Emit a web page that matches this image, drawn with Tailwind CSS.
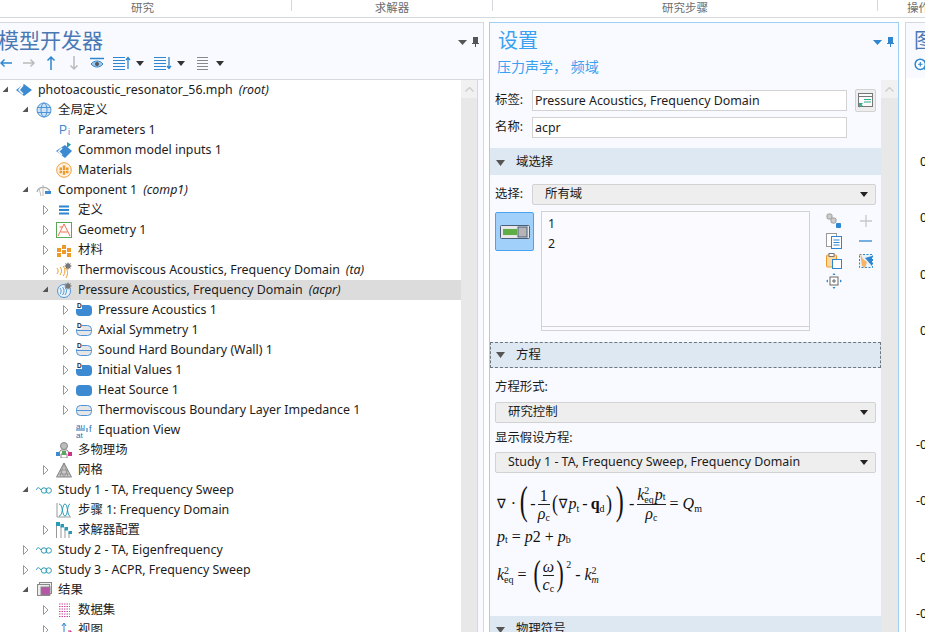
<!DOCTYPE html>
<html lang="en">
<head>
  <meta charset="UTF-8">
  <title>Model Builder</title>
  <script src="https://cdn.jsdelivr.net/npm/@tailwindcss/browser@4"></script>
</head>
<body class="w-[925px] h-[632px] overflow-hidden bg-white text-[#1c1c1c] text-[12.4px] font-['Noto_Sans','Noto_Sans_CJK_SC',sans-serif]">

  <!-- shared icons -->
  <svg class="hidden">
    <symbol id="open" viewBox="0 0 12 12"><path d="M8 2.500V8H2.500z" fill="#555"/></symbol>
    <symbol id="closed" viewBox="0 0 12 12"><path d="M3.500 1.500L8 6l-4.500 4.500z" fill="#fff" stroke="#999"/></symbol>
    <symbol id="solid" viewBox="0 0 16 16"><rect x="0" y="3" width="16" height="11" rx="4" fill="#3b8ad2"/></symbol>
    <symbol id="dsolid" viewBox="0 0 16 16"><rect x="0" y="3" width="16" height="11" rx="4" fill="#3b8ad2"/><rect x="0" y="0" width="6" height="7" fill="#fff"/><text x="1" y="6" font-size="6.500" font-weight="700" font-family="Liberation Sans" fill="#223">D</text></symbol>
    <symbol id="bound" viewBox="0 0 16 16"><rect x=".5" y="3.500" width="15" height="10" rx="4" fill="#e6e6e6" stroke="#4d95d8"/><path d="M0 8.500h16" stroke="#4d95d8"/></symbol>
    <symbol id="dbound" viewBox="0 0 16 16"><rect x=".5" y="3.500" width="15" height="10" rx="4" fill="#e6e6e6" stroke="#4d95d8"/><path d="M0 8.500h16" stroke="#4d95d8"/><rect x="0" y="0" width="6" height="7" fill="#fff"/><text x="1" y="6" font-size="6.500" font-weight="700" font-family="Liberation Sans" fill="#223">D</text></symbol>
    <symbol id="study" viewBox="0 0 16 16"><path d="M0 8c1.500-3 3-3 5 0" fill="none" stroke="#2a9bb5"/><circle cx="8" cy="8.500" r="2.700" fill="none" stroke="#2a9bb5"/><circle cx="12.700" cy="8.500" r="2.700" fill="none" stroke="#2a9bb5"/></symbol>
  </svg>

  <!-- ribbon group labels -->
  <div class="h-[18px] flex text-[11.5px] leading-[16px] text-[#6d6d6d] border-b border-[#d5d8dc]">
    <div class="w-[292px] shrink-0 h-[11px] pr-[6px] text-center border-r border-[#d5d8dc]">研究</div>
    <div class="w-[201px] shrink-0 h-[11px] text-center border-r border-[#d5d8dc]">求解器</div>
    <div class="w-[385px] shrink-0 h-[11px] text-center border-r border-[#d5d8dc]">研究步骤</div>
    <div class="pl-[29px] whitespace-nowrap shrink-0">操作</div>
  </div>

  <div class="flex mt-[4px] h-[610px]">
    <!-- model builder -->
    <div class="w-[484px] shrink-0 flex flex-col bg-[#f9faff] border-t border-r border-[#d5d8dc] overflow-hidden">
      <div class="h-[57px] shrink-0 relative border-b border-[#d5d8dc]">
        <div class="text-[21px] leading-[26px] pt-[4px] -ml-[2px] text-[#4a78b4]">模型开发器</div>
        <div class="flex items-center h-[20px]">
          <svg class="-ml-[1px]" width="14" height="12" viewBox="0 0 14 12"><path d="M13 6H2M5.500 2.500L2 6l3.500 3.500" fill="none" stroke="#2d86cf" stroke-width="1.500"/></svg>
          <svg class="ml-[9px]" width="14" height="12" viewBox="0 0 14 12"><path d="M1 6h11M8.500 2.500L12 6 8.500 9.500" fill="none" stroke="#bbb" stroke-width="1.500"/></svg>
          <svg class="ml-[8px]" width="14" height="16" viewBox="0 0 14 16"><path d="M7 15V2M3.500 5.500L7 2l3.500 3.500" fill="none" stroke="#2d86cf" stroke-width="1.500"/></svg>
          <svg class="ml-[9px]" width="14" height="16" viewBox="0 0 14 16"><path d="M7 1v13M3.500 10.500L7 14l3.500-3.500" fill="none" stroke="#bbb" stroke-width="1.500"/></svg>
          <svg class="ml-[9px]" width="14" height="12" viewBox="0 0 14 12"><path d="M0 1.500h14" stroke="#2d86cf" stroke-width="1.500"/><path d="M1 7c3-4 9-4 12 0-3 4-9 4-12 0z" fill="#9fc7ea" stroke="#2d86cf"/><circle cx="7" cy="7" r="2" fill="#555"/></svg>
          <svg class="ml-[9px]" width="18" height="14" viewBox="0 0 18 14"><path d="M0 1.500h12M0 4.500h12M0 7.500h12M0 10.500h12M0 13.500h12" stroke="#2d86cf"/><path d="M15 13V2M13 4l2-2.500L17 4" fill="none" stroke="#2d86cf" stroke-width="1.300"/></svg>
          <svg class="ml-[5px]" width="8" height="5" viewBox="0 0 8 5"><path d="M0 0h8L4 5z" fill="#333"/></svg>
          <svg class="ml-[10px]" width="18" height="14" viewBox="0 0 18 14"><path d="M0 1.500h12M0 4.500h12M0 7.500h12M0 10.500h12M0 13.500h12" stroke="#2d86cf"/><path d="M15 1v11M13 10l2 2.500 2-2.500" fill="none" stroke="#2d86cf" stroke-width="1.300"/></svg>
          <svg class="ml-[5px]" width="8" height="5" viewBox="0 0 8 5"><path d="M0 0h8L4 5z" fill="#333"/></svg>
          <svg class="ml-[12px]" width="12" height="14" viewBox="0 0 12 14"><path d="M0 1.500h11M0 4.500h11M0 7.500h11M0 10.500h11M0 13.500h11" stroke="#888"/></svg>
          <svg class="ml-[7px]" width="8" height="5" viewBox="0 0 8 5"><path d="M0 0h8L4 5z" fill="#333"/></svg>
        </div>
        <div class="absolute right-[4px] top-[14px] flex items-center gap-[5px]">
          <svg width="9" height="5" viewBox="0 0 9 5"><path d="M0 0h9L4.500 5z" fill="#555"/></svg>
          <svg width="7" height="10" viewBox="0 0 7 10"><path d="M1 0h5v6h1v1H4v3H3V7H0V6h1z" fill="#555"/></svg>
        </div>
      </div>

      <div class="flex flex-1 min-h-0">
        <div class="w-[461px] shrink-0 bg-white">
          <div class="h-5 flex items-center whitespace-nowrap pl-0"><svg class="w-3 h-3 mr-1"><use href="#open"/></svg><svg class="mr-[6px]" width="16" height="16" viewBox="0 0 16 16"><path d="M8 2l8 6-8 6-8-6z" fill="#3b8ad2"/><path d="M7 3L3 8l4 4" fill="none" stroke="#fff" stroke-width="1.500"/></svg>photoacoustic_resonator_56.mph<i class="ml-[6px]">(root)</i></div>
          <div class="h-5 flex items-center whitespace-nowrap pl-5"><svg class="w-3 h-3 mr-1"><use href="#open"/></svg><svg class="mr-[6px]" width="16" height="16" viewBox="0 0 16 16"><circle cx="8" cy="8" r="7" fill="#cfe3f5" stroke="#4d95d8"/><ellipse cx="8" cy="8" rx="3" ry="7" fill="none" stroke="#4d95d8"/><path d="M1 5.500h14M1 10.500h14" stroke="#4d95d8"/></svg>全局定义</div>
          <div class="h-5 flex items-center whitespace-nowrap pl-[56px]"><svg class="mr-[6px]" width="16" height="16" viewBox="0 0 16 16"><text x="3" y="12" font-size="12" font-family="Liberation Sans" fill="#3b8ad2">P</text><text x="12" y="13" font-size="9" font-family="Liberation Sans" fill="#3b8ad2">i</text></svg>Parameters 1</div>
          <div class="h-5 flex items-center whitespace-nowrap pl-[56px]"><svg class="mr-[6px]" width="16" height="16" viewBox="0 0 16 16"><path d="M9 3l7 6-7 7-9-7z" fill="#3b8ad2"/><path d="M6 6L2.500 9.500 6 13" fill="none" stroke="#fff" stroke-width="1.500"/><path d="M11 0l4 2.500L11 6z" fill="#2a9bb5"/></svg>Common model inputs 1</div>
          <div class="h-5 flex items-center whitespace-nowrap pl-[56px]"><svg class="mr-[6px]" width="16" height="16" viewBox="0 0 16 16"><circle cx="8" cy="8" r="7.300" fill="#fdf1df" stroke="#f0a040"/><path d="M3.500 5.500h2.500v2.500H3.500zM6.800 3.500h2.500v4.500H6.800zM10 5.500h2.500v2.500H10zM3.500 8.800h2.500v2.500H3.500zM6.800 8.800h2.500v4H6.800zM10 8.800h2.500v2.500H10z" fill="#ec9a30"/></svg>Materials</div>
          <div class="h-5 flex items-center whitespace-nowrap pl-5"><svg class="w-3 h-3 mr-1"><use href="#open"/></svg><svg class="mr-[6px]" width="16" height="16" viewBox="0 0 16 16"><path d="M1 10c1-5 9-7 13-1" fill="none" stroke="#aaa" stroke-width="1.300"/><path d="M7 3v11M3 6l2 8" stroke="#bbb"/><rect x="9" y="9" width="6" height="3" fill="#3b8ad2"/></svg>Component 1<i class="ml-[6px]">(comp1)</i></div>
          <div class="h-5 flex items-center whitespace-nowrap pl-10"><svg class="w-3 h-3 mr-1"><use href="#closed"/></svg><svg class="mr-[6px]" width="16" height="16" viewBox="0 0 16 16"><path d="M3 4.500h10M3 8h10M3 11.500h10" stroke="#2d86cf" stroke-width="2"/></svg>定义</div>
          <div class="h-5 flex items-center whitespace-nowrap pl-10"><svg class="w-3 h-3 mr-1"><use href="#closed"/></svg><svg class="mr-[6px]" width="16" height="16" viewBox="0 0 16 16"><rect x=".5" y=".5" width="15" height="15" fill="#fff" stroke="#5aa85a"/><path d="M2 14L8 2l6 12M3.500 5h3M4.500 10h7" fill="none" stroke="#ee7050"/></svg>Geometry 1</div>
          <div class="h-5 flex items-center whitespace-nowrap pl-10"><svg class="w-3 h-3 mr-1"><use href="#closed"/></svg><svg class="mr-[6px]" width="16" height="16" viewBox="0 0 16 16"><path d="M1 6h4v4H1zM6 3h4v4H6zM11 6h4v4h-4zM1 11h4v4H1zM6 8h4v4H6zM11 11h4v4h-4z" fill="#ee9a2a"/></svg>材料</div>
          <div class="h-5 flex items-center whitespace-nowrap pl-10"><svg class="w-3 h-3 mr-1"><use href="#closed"/></svg><svg class="mr-[6px]" width="16" height="16" viewBox="0 0 16 16"><path d="M1 6c1.500 2 1.500 4 0 6M4 5c2 2.500 2 5 0 8M7 4c2.500 3 2.500 7 0 10M10 6c2 3 2 6 0 10" fill="none" stroke="#ee9a2a"/><path d="M12 0l1 2 2-1-1 2 2 1-2 1 1 2-2-1-1 2-1-2-2 1 1-2-2-1 2-1-1-2 2 1z" fill="#777"/></svg>Thermoviscous Acoustics, Frequency Domain<i class="ml-[6px]">(ta)</i></div>
          <div class="h-5 flex items-center whitespace-nowrap pl-10 bg-[#dcdcdc]"><svg class="w-3 h-3 mr-1"><use href="#open"/></svg><svg class="mr-[6px]" width="16" height="16" viewBox="0 0 16 16"><circle cx="8" cy="9" r="6.500" fill="#eaf3fb" stroke="#4d95d8"/><path d="M4 6c1.500 2 1.500 4 0 6M6.500 5c2 2.500 2 5 0 8M9 5c2 2.500 2 5 0 8" fill="none" stroke="#4d95d8"/><path d="M12 0l1 2 2-1-1 2 2 1-2 1 1 2-2-1-1 2-1-2-2 1 1-2-2-1 2-1-1-2 2 1z" fill="#777"/></svg>Pressure Acoustics, Frequency Domain<i class="ml-[6px]">(acpr)</i></div>
          <div class="h-5 flex items-center whitespace-nowrap pl-[60px]"><svg class="w-3 h-3 mr-1"><use href="#closed"/></svg><svg class="w-4 h-4 mr-[6px]"><use href="#dsolid"/></svg>Pressure Acoustics 1</div>
          <div class="h-5 flex items-center whitespace-nowrap pl-[60px]"><svg class="w-3 h-3 mr-1"><use href="#closed"/></svg><svg class="w-4 h-4 mr-[6px]"><use href="#dbound"/></svg>Axial Symmetry 1</div>
          <div class="h-5 flex items-center whitespace-nowrap pl-[60px]"><svg class="w-3 h-3 mr-1"><use href="#closed"/></svg><svg class="w-4 h-4 mr-[6px]"><use href="#dbound"/></svg>Sound Hard Boundary (Wall) 1</div>
          <div class="h-5 flex items-center whitespace-nowrap pl-[60px]"><svg class="w-3 h-3 mr-1"><use href="#closed"/></svg><svg class="w-4 h-4 mr-[6px]"><use href="#dsolid"/></svg>Initial Values 1</div>
          <div class="h-5 flex items-center whitespace-nowrap pl-[60px]"><svg class="w-3 h-3 mr-1"><use href="#closed"/></svg><svg class="w-4 h-4 mr-[6px]"><use href="#solid"/></svg>Heat Source 1</div>
          <div class="h-5 flex items-center whitespace-nowrap pl-[60px]"><svg class="w-3 h-3 mr-1"><use href="#closed"/></svg><svg class="w-4 h-4 mr-[6px]"><use href="#bound"/></svg>Thermoviscous Boundary Layer Impedance 1</div>
          <div class="h-5 flex items-center whitespace-nowrap pl-[76px]"><svg class="mr-[6px]" width="16" height="16" viewBox="0 0 16 16"><text x="0" y="6.500" font-size="8" font-family="Liberation Sans" fill="#2d6cb0">au</text><path d="M0 8h9M10 7h2M10 9h2" stroke="#2d6cb0"/><text x="0" y="15.500" font-size="8" font-family="Liberation Sans" fill="#2d6cb0">at</text><text x="13" y="10" font-size="9" font-family="Liberation Sans" fill="#2d6cb0">f</text></svg>Equation View</div>
          <div class="h-5 flex items-center whitespace-nowrap pl-[56px]"><svg class="mr-[6px]" width="16" height="16" viewBox="0 0 16 16"><circle cx="8" cy="4" r="3.500" fill="#bbb" stroke="#888"/><path d="M2 12l3-4h6l3 4" fill="none" stroke="#888"/><path d="M5 12h6v4H5z" fill="#fff" stroke="#888"/><rect x="0" y="10" width="4" height="4" fill="#3b8ad2"/><rect x="6" y="9" width="4" height="4" fill="#5aa85a"/><rect x="12" y="10" width="4" height="4" fill="#d0308a"/></svg>多物理场</div>
          <div class="h-5 flex items-center whitespace-nowrap pl-10"><svg class="w-3 h-3 mr-1"><use href="#closed"/></svg><svg class="mr-[6px]" width="16" height="16" viewBox="0 0 16 16"><path d="M8 1l7.500 14H.5z" fill="#c8c8c8" stroke="#888"/><path d="M4 8h8M2 12h12M8 1l-4 14M8 1l4 14M4 8l4 7 4-7" fill="none" stroke="#888" stroke-width=".7"/></svg>网格</div>
          <div class="h-5 flex items-center whitespace-nowrap pl-5"><svg class="w-3 h-3 mr-1"><use href="#open"/></svg><svg class="w-4 h-4 mr-[6px]"><use href="#study"/></svg>Study 1 - TA, Frequency Sweep</div>
          <div class="h-5 flex items-center whitespace-nowrap pl-[56px]"><svg class="mr-[6px]" width="16" height="16" viewBox="0 0 16 16"><path d="M1 1v14h14" fill="none" stroke="#999"/><path d="M3 2c4 0 3 12 6 12s2-12 5-12M3 14c4 0 3-12 6-12s2 12 5 12" fill="none" stroke="#2a9bb5"/></svg>步骤 1: Frequency Domain</div>
          <div class="h-5 flex items-center whitespace-nowrap pl-10"><svg class="w-3 h-3 mr-1"><use href="#closed"/></svg><svg class="mr-[6px]" width="16" height="16" viewBox="0 0 16 16"><path d="M.5 2v14M5 4v12M9 7v9M13 10v6" stroke="#999"/><path d="M0 0h4v4H0zM4.500 2h3.500v3.500H4.500zM8.500 5H12v3.500H8.500zM12.500 9H16v3h-3.500z" fill="#2a9bb5"/></svg>求解器配置</div>
          <div class="h-5 flex items-center whitespace-nowrap pl-5"><svg class="w-3 h-3 mr-1"><use href="#closed"/></svg><svg class="w-4 h-4 mr-[6px]"><use href="#study"/></svg>Study 2 - TA, Eigenfrequency</div>
          <div class="h-5 flex items-center whitespace-nowrap pl-5"><svg class="w-3 h-3 mr-1"><use href="#closed"/></svg><svg class="w-4 h-4 mr-[6px]"><use href="#study"/></svg>Study 3 - ACPR, Frequency Sweep</div>
          <div class="h-5 flex items-center whitespace-nowrap pl-5"><svg class="w-3 h-3 mr-1"><use href="#open"/></svg><svg class="mr-[6px]" width="16" height="16" viewBox="0 0 16 16"><rect x="3.500" y=".5" width="12" height="11" fill="#eee" stroke="#888"/><rect x="1.500" y="2.500" width="12" height="11" fill="#eee" stroke="#888"/><rect x="5" y="5" width="9" height="8" fill="#b455a5" stroke="#888"/></svg>结果</div>
          <div class="h-5 flex items-center whitespace-nowrap pl-10"><svg class="w-3 h-3 mr-1"><use href="#closed"/></svg><svg class="mr-[6px]" width="16" height="16" viewBox="0 0 16 16"><path d="M3 2h11M3 4.500h11M3 7h11M3 9.500h11M3 12h11M3 14.500h11" stroke="#c9489f" stroke-dasharray="1.500 1"/></svg>数据集</div>
          <div class="h-5 flex items-center whitespace-nowrap pl-10"><svg class="w-3 h-3 mr-1"><use href="#closed"/></svg><svg class="mr-[6px]" width="16" height="16" viewBox="0 0 16 16"><path d="M8 12V2M6 4l2-3 2 3" fill="none" stroke="#2d86cf"/><path d="M7 12l-5 3M2 12v3h3" fill="none" stroke="#5aa85a"/><path d="M10 13l5-4M12 9h3v3" fill="none" stroke="#d0308a"/></svg>视图</div>
        </div>
        <!-- tree scrollbar -->
        <div class="w-[17px] shrink-0 bg-[#e8e8e8] border-r border-[#d5d8dc]">
          <div class="h-[18px] bg-[#f1f1f1] flex items-center justify-center"><svg width="9" height="5" viewBox="0 0 9 5"><path d="M.5 4.500l4-4 4 4" fill="none" stroke="#ccc" stroke-width="1.300"/></svg></div>
        </div>
      </div>
    </div>

    <!-- settings -->
    <div class="w-[410px] ml-[5px] shrink-0 flex flex-col bg-[#f9faff] border-x border-t border-[#9cd0f7] overflow-hidden">
      <div class="h-[57px] shrink-0 relative pl-[8px]">
        <div class="text-[20px] leading-[26px] pt-[5px] text-[#3ba0f0]">设置</div>
        <div class="text-[14px] leading-[18px] mt-[4px] -ml-[1px] text-[#3ba0f0]">压力声学， 频域</div>
        <div class="absolute right-[4px] top-[14px] flex items-center gap-[5px]">
          <svg width="9" height="5" viewBox="0 0 9 5"><path d="M0 0h9L4.500 5z" fill="#2d86cf"/></svg>
          <svg width="7" height="10" viewBox="0 0 7 10"><path d="M1 0h5v6h1v1H4v3H3V7H0V6h1z" fill="#2d86cf"/></svg>
        </div>
      </div>

      <div class="flex flex-1 min-h-0">
        <div class="w-[391px] shrink-0">
          <div class="flex items-center h-[23px] pl-[5px] mt-[9px]">
            <span class="w-[37px] shrink-0">标签:</span>
            <div class="w-[315px] h-[21px] bg-white border border-[#d2d2d2] pl-[2px] leading-[19px]">Pressure Acoustics, Frequency Domain</div>
            <div class="ml-[8px] w-[21px] h-[23px] bg-[#eeeeee] border border-[#d2d2d2] rounded-[2px] flex items-center justify-center">
              <svg width="15" height="15" viewBox="0 0 15 15"><rect x=".5" y=".5" width="14" height="13" fill="#fafafa" stroke="#777"/><path d="M1 3.500h13" stroke="#777"/><path d="M6 6.500h7M6 9h7" stroke="#2cb08a"/><path d="M1 15v-5h4l-1.500 1.500L5 13l-1 1-1.500-1.500z" fill="#2cb08a"/></svg>
            </div>
          </div>
          <div class="flex items-center h-[21px] pl-[5px] mt-[5px]">
            <span class="w-[37px] shrink-0">名称:</span>
            <div class="w-[315px] h-[21px] bg-white border border-[#d2d2d2] pl-[2px] leading-[19px]">acpr</div>
          </div>

          <div class="h-[27px] mt-[10px] bg-[#dee8f3] flex items-center pt-[2px]">
            <svg class="ml-[6px] mr-[11px]" width="9" height="6" viewBox="0 0 9 6"><path d="M0 0h9L4.500 6z" fill="#555"/></svg>域选择
          </div>

          <div class="flex items-center h-[21px] pl-[5px] mt-[9px]">
            <span class="w-[37px] shrink-0">选择:</span>
            <div class="w-[344px] h-[21px] bg-[#eeeeee] border border-[#d2d2d2] rounded-[2px] flex items-center justify-between pl-[12px] pr-[7px]">所有域<svg width="8" height="5" viewBox="0 0 8 5"><path d="M0 0h8L4 5z" fill="#222"/></svg></div>
          </div>

          <div class="flex pl-[5px] mt-[6px]">
            <div class="w-[39px] h-[39px] mt-[1px] bg-[#a1d1fb] border border-[#4aa3ef] rounded-[2px] flex items-center justify-center">
              <svg width="30" height="14" viewBox="0 0 30 14"><rect x=".5" y=".5" width="29" height="13" rx="1" fill="#e8e8e8" stroke="#4a5f7a"/><rect x="3" y="4" width="14" height="6" fill="#5fae45"/><rect x="18" y="2" width="9" height="10" fill="#b5b5b5" stroke="#4a5f7a"/></svg>
            </div>
            <div class="ml-[7px] w-[269px] h-[120px] bg-[#fbfbff] border border-[#d2d2d2] flex flex-col">
              <div class="flex-1 pl-[6px] pt-[2px] leading-[20px]"><div>1</div><div>2</div></div>
              <div class="h-[4px] border-t border-[#d2d2d2]"></div>
            </div>
            <!-- selection tools -->
            <div class="ml-[16px] w-[16px] flex flex-col gap-[4px] pt-[2px]">
              <svg width="16" height="16" viewBox="0 0 16 16"><rect x="1" y="1" width="5" height="5" rx="1.500" fill="#ccc" stroke="#999"/><rect x="5" y="5" width="5" height="5" rx="1.500" fill="#ccc" stroke="#999"/><rect x="10" y="10" width="5" height="5" rx="1" fill="#2d86cf"/></svg>
              <svg width="16" height="16" viewBox="0 0 16 16"><rect x=".5" y=".5" width="10" height="13" fill="#fff" stroke="#999"/><rect x="5.500" y="3.500" width="10" height="12" fill="#fff" stroke="#2d86cf"/><path d="M7.500 7h6M7.500 9.500h6M7.500 12h6" stroke="#2d86cf"/></svg>
              <svg width="16" height="16" viewBox="0 0 16 16"><rect x=".5" y="2" width="10" height="12" rx="1" fill="#fdd9a0" stroke="#ee9a2a"/><rect x="3" y="0.500" width="5" height="3" fill="#fff" stroke="#777"/><rect x="6.500" y="6.500" width="9" height="9" fill="#fff" stroke="#2d86cf"/></svg>
              <svg width="16" height="16" viewBox="0 0 16 16"><rect x="4" y="4" width="8" height="8" fill="#fff" stroke="#666"/><path d="M8 6v4M6 8h4" stroke="#666"/><path d="M8 0l1.500 2h-3zM8 16l1.500-2h-3zM0 8l2-1.500v3zM16 8l-2-1.500v3z" fill="#2d86cf"/></svg>
            </div>
            <div class="ml-[16px] w-[16px] flex flex-col gap-[4px] pt-[2px]">
              <svg width="16" height="16" viewBox="0 0 16 16"><path d="M8 2v12M2 8h12" stroke="#c8c8c8" stroke-width="1.300"/></svg>
              <svg width="16" height="16" viewBox="0 0 16 16"><path d="M1 8h13" stroke="#2d86cf" stroke-width="1.300"/></svg>
              <svg width="16" height="16" viewBox="0 0 16 16"><rect x="1.500" y="1.500" width="13" height="13" fill="#e8f2fb" stroke="#2d86cf" stroke-dasharray="2 1.500"/><path d="M7 5l7-2v10z" fill="#2d86cf"/><path d="M2 0l3 6 4 3-2 6-3-2-1-7z" fill="#f6b468"/></svg>
            </div>
          </div>

          <div class="h-[26px] mt-[11px] bg-[#dee8f3] border border-dashed border-[#6c7680] flex items-center">
            <svg class="ml-[5px] mr-[11px]" width="9" height="6" viewBox="0 0 9 6"><path d="M0 0h9L4.500 6z" fill="#555"/></svg>方程
          </div>

          <div class="pl-[5px] mt-[9px] leading-[20px]">方程形式:</div>
          <div class="ml-[5px] mt-[5px] w-[381px] h-[21px] bg-[#eeeeee] border border-[#d2d2d2] rounded-[2px] flex items-center justify-between pl-[12px] pr-[7px]">研究控制<svg width="8" height="5" viewBox="0 0 8 5"><path d="M0 0h8L4 5z" fill="#222"/></svg></div>
          <div class="pl-[5px] mt-[5px] leading-[20px]">显示假设方程:</div>
          <div class="ml-[5px] mt-[4px] w-[381px] h-[21px] bg-[#eeeeee] border border-[#d2d2d2] rounded-[2px] flex items-center justify-between pl-[12px] pr-[7px]">Study 1 - TA, Frequency Sweep, Frequency Domain<svg width="8" height="5" viewBox="0 0 8 5"><path d="M0 0h8L4 5z" fill="#222"/></svg></div>

          <!-- equations -->
          <div class="pl-[7px] font-['Liberation_Serif',serif] text-[16px] text-[#111]">
            <div class="flex items-center h-[44px] mt-[9px] whitespace-nowrap">
              <span class="font-['DejaVu_Sans',sans-serif] text-[13px]">∇</span>
              <span class="ml-[5px]">·</span>
              <span class="text-[40px] leading-none -mt-[6px] ml-[1px] scale-x-60">(</span>
              <span>-</span>
              <span class="ml-[2px] inline-flex flex-col items-center leading-[17px]"><span class="border-b border-[#222] w-full text-center">1</span><span><i>ρ</i><sub class="text-[10px]">c</sub></span></span>
              <span class="text-[24px] -mt-[2px] ml-[1px] scale-x-75">(</span>
              <span class="font-['DejaVu_Sans',sans-serif] text-[13px]">∇</span>
              <span class="ml-[1px]"><i>p</i><sub class="text-[10px]">t</sub><span class="mx-[3px]">-</span><b>q</b><sub class="text-[10px]">d</sub></span>
              <span class="text-[24px] -mt-[2px] scale-x-75">)</span>
              <span class="text-[40px] leading-none -mt-[6px] scale-x-60">)</span>
              <span class="mx-[3px]">-</span>
              <span class="inline-flex flex-col items-center leading-[18px]">
                <span class="flex items-center border-b border-[#222] w-full justify-center"><i>k</i><span class="inline-flex flex-col text-[10px] leading-[9px]"><span>2</span><span>eq</span></span><i class="ml-[1px]">p</i><sub class="text-[10px]">t</sub></span>
                <span><i>ρ</i><sub class="text-[10px]">c</sub></span>
              </span>
              <span class="mx-[4px]">=</span>
              <span><i>Q</i><sub class="text-[10px]">m</sub></span>
            </div>
            <div class="h-[24px] -mt-[1px] flex items-center whitespace-pre"><i>p</i><sub class="text-[10px]">t</sub><span class="mx-[4px]">=</span><i>p</i><span>2</span><span class="mx-[4px]">+</span><i>p</i><sub class="text-[10px]">b</sub></div>
            <div class="h-[40px] mt-[6px] flex items-center whitespace-nowrap">
              <i>k</i><span class="inline-flex flex-col text-[10px] leading-[9px]"><span>2</span><span>eq</span></span>
              <span class="mx-[4px]">=</span>
              <span class="text-[36px] leading-none -mt-[5px] scale-x-60">(</span>
              <span class="inline-flex flex-col items-center leading-[17px]"><span class="border-b border-[#222] w-full text-center"><i>ω</i></span><span><i>c</i><sub class="text-[10px]">c</sub></span></span>
              <span class="text-[36px] leading-none -mt-[5px] scale-x-60">)</span>
              <span class="text-[10px] -mt-[22px]">2</span>
              <span class="mx-[4px]">-</span>
              <i>k</i><span class="inline-flex flex-col text-[10px] leading-[9px]"><span>2</span><i>m</i></span>
            </div>
          </div>

          <div class="h-[27px] mt-[21px] bg-[#dee8f3] flex items-center">
            <svg class="ml-[6px] mr-[11px]" width="9" height="6" viewBox="0 0 9 6"><path d="M0 0h9L4.500 6z" fill="#555"/></svg>物理符号
          </div>
        </div>
        <!-- settings scrollbar -->
        <div class="w-[17px] shrink-0 bg-[#e8e8e8]">
          <div class="h-[18px] bg-[#f1f1f1] flex items-center justify-center"><svg width="9" height="5" viewBox="0 0 9 5"><path d="M.5 4.500l4-4 4 4" fill="none" stroke="#ccc" stroke-width="1.300"/></svg></div>
        </div>
      </div>
    </div>

    <!-- graphics -->
    <div class="ml-[6px] flex-1 flex flex-col bg-white border-t border-l border-[#d5d8dc] overflow-hidden">
      <div class="h-[55px] shrink-0 bg-[#f9faff] pl-[8px]">
        <div class="text-[20px] leading-[26px] pt-[5px] text-[#4a78b4] whitespace-nowrap">图形</div>
        <svg class="mt-[4px]" width="16" height="16" viewBox="0 0 14 14"><circle cx="5.500" cy="5.500" r="4.500" fill="#fff" stroke="#2d86cf" stroke-width="1.300"/><path d="M3.500 5.500h4M5.500 3.500v4" stroke="#2d86cf"/><path d="M9 9l4 4" stroke="#2d86cf" stroke-width="1.500"/></svg>
      </div>
      <div class="pl-[14px] text-[#111] leading-[16px]">
        <div class="mt-[76px]">0</div>
        <div class="mt-[40px]">0</div>
        <div class="mt-[41px]">0</div>
        <div class="mt-[40px]">0</div>
      </div>
      <div class="pl-[10px] text-[#111] leading-[16px] whitespace-nowrap">
        <div class="mt-[98px]">-0</div>
        <div class="mt-[40px]">-0</div>
        <div class="mt-[41px]">-0</div>
        <div class="mt-[40px]">-0</div>
      </div>
    </div>
  </div>
</body>
</html>
